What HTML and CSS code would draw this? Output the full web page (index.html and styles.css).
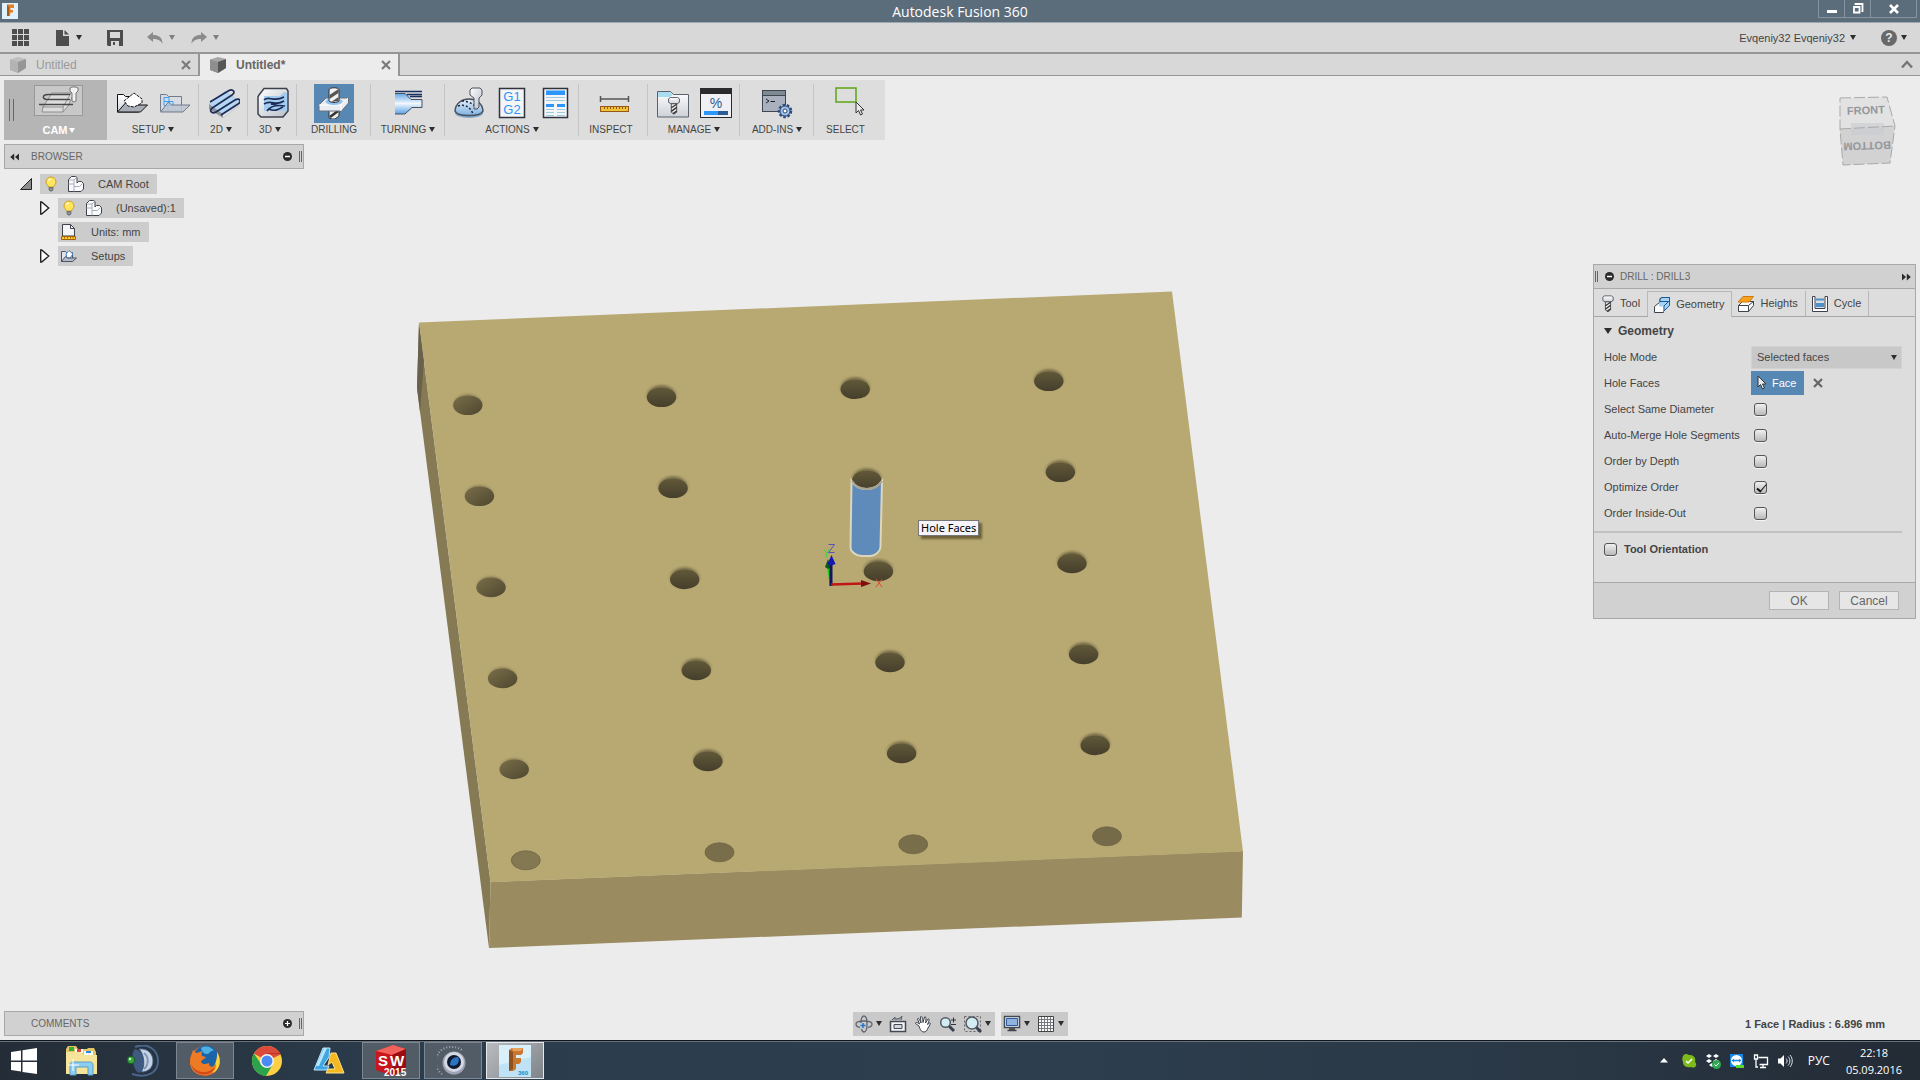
FILE: index.html
```html
<!DOCTYPE html>
<html lang="en">
<head>
    <meta charset="UTF-8">
    <meta name="viewport" content="width=device-width, initial-scale=1.0">
    <title>Autodesk Fusion 360</title>
    <link rel="stylesheet" href="styles.css">
</head>
<body>

    <!-- Shared shapes -->
    <svg class="defs" width="0" height="0" aria-hidden="true">
        <defs>
            <linearGradient id="steel" x1="0" y1="0" x2="1" y2="1">
                <stop offset="0" stop-color="#ffffff"/>
                <stop offset="1" stop-color="#b9bec6"/>
            </linearGradient>
            <linearGradient id="sky" x1="0" y1="0" x2="0" y2="1">
                <stop offset="0" stop-color="#e4f1fc"/>
                <stop offset="1" stop-color="#7fb2e2"/>
            </linearGradient>
            <linearGradient id="skyDown" x1="0" y1="0" x2="0" y2="1">
                <stop offset="0" stop-color="#5ba3e6"/>
                <stop offset="0.5" stop-color="#f2f8fd"/>
                <stop offset="1" stop-color="#5ba3e6"/>
            </linearGradient>
            <linearGradient id="paper" x1="0" y1="0" x2="0" y2="1">
                <stop offset="0" stop-color="#ffffff"/>
                <stop offset="1" stop-color="#cdd1d8"/>
            </linearGradient>
            <symbol id="bulb" viewBox="0 0 16 16">
                <path d="M8 1a5 5 0 0 0-5 5c0 2 2 3.200 2.500 5h5C11 9.200 13 8 13 6a5 5 0 0 0-5-5z" fill="#ffe65c" stroke="#d09c28"/>
                <path d="M5.500 4.500a3 3 0 0 1 2-1.500" stroke="#fff" stroke-width="1.500" fill="none"/>
                <path d="M6 11.500h4v2L9 15H7l-1-1.500z" fill="#8c8f96" stroke="#565a62" stroke-width=".7"/>
            </symbol>
            <symbol id="component" viewBox="0 0 16 16">
                <path d="M.5 3.500l3-3h4l1.500 1V7l1.500-1.500h3l2 2V13l-2.500 2.500H.5z" fill="#fafbfd" stroke="#3d424d"/>
                <path d="M.5 8H6v7.500M6 10.500h5.500l3-3M6 8V4l2.500-2.500M6 4H1" stroke="#a9adb7" fill="none"/>
            </symbol>
            <symbol id="doc-cube" viewBox="0 0 16 16">
                <path d="M0 2.500L8 0l8 2v9l-8 5-8-3z" fill="#a6a6a6"/>
                <path d="M8 5l8-3v9l-8 5z" fill="#565656"/>
                <path d="M0 2.500L8 5v11l-8-3z" fill="#8f8f8f"/>
            </symbol>
            <symbol id="cross" viewBox="0 0 10 10">
                <path d="M1 1l8 8M9 1L1 9" stroke="currentColor" stroke-width="2.200" fill="none"/>
            </symbol>
            <symbol id="cursor" viewBox="0 0 10 16">
                <path d="M1 1v11l2.500-2.500L5.500 14l2-1-2-4H9z" fill="#e9eaec" stroke="#333"/>
            </symbol>
            <symbol id="screw" viewBox="0 0 14 20">
                <path d="M1 2l2-1.500h8L13 2v4l-2.500 1.500h-7L1 6z" fill="url(#paper)" stroke="#4a4f59"/>
                <path d="M4 7.500h6V17l-3 2-3-2z" fill="#f0f0f0" stroke="#444"/>
                <path d="M4 12l6-4M4 16l6-4.500M6 18.500l4-3" stroke="#333" stroke-width="1.500"/>
            </symbol>
            <symbol id="tray" viewBox="0 0 32 32">
                <path d="M1.500 25V7.500h6l2 2h13V25z" fill="url(#paper)" stroke="#111"/>
            </symbol>
            <symbol id="open" viewBox="0 0 12 10">
                <path d="M0 5l5-4.500v9zM6 5l5-4.500v9z" fill="#2a2a2a"/>
            </symbol>
        </defs>
    </svg>

    <header class="title-bar">
        <svg class="app-logo" viewBox="0 0 16 16" aria-hidden="true">
            <rect width="16" height="16" fill="#dff1fb"/>
            <path d="M5 1.500h7v3.500H8.500v2H11v2.500H8.500L8 13H5z" fill="#e27f22"/>
            <path d="M5 1.500l2 2.500v9H5z" fill="#a85a14"/>
        </svg>
        <h1>Autodesk Fusion 360</h1>
        <div class="window-buttons">
            <button type="button" aria-label="Minimize">
                <svg width="12" height="12"><rect x="1" y="7" width="10" height="3" fill="#fff"/></svg>
            </button>
            <button type="button" aria-label="Restore">
                <svg width="12" height="12"><path d="M3.500 2V1h7v7H9.500M2 4h5.500v5.500H2z" fill="none" stroke="#fff" stroke-width="1.800"/></svg>
            </button>
            <button type="button" class="close" aria-label="Close">
                <svg width="12" height="12"><path d="M2 2l8 8M10 2l-8 8" stroke="#fff" stroke-width="2.500"/></svg>
            </button>
        </div>
    </header>

    <nav class="quick-bar">
        <button type="button" class="quick-grid" aria-label="Data panel">
            <svg width="17" height="17"><path d="M0 0h5v5H0zM6 0h5v5H6zM12 0h5v5h-5zM0 6h5v5H0zM6 6h5v5H6zM12 6h5v5h-5zM0 12h5v5H0zM6 12h5v5H6zM12 12h5v5h-5z" fill="#4d4d4d"/></svg>
        </button>
        <button type="button" class="quick-file" aria-label="File">
            <svg width="14" height="16"><path d="M0 0h7v6h6v10H0z" fill="#4d4d4d"/><path d="M8.500 0L13 4.500H8.500z" fill="#4d4d4d"/></svg>
            <span class="caret"></span>
        </button>
        <button type="button" class="quick-save" aria-label="Save">
            <svg width="16" height="16"><path d="M0 0h16v16H1l-1-1z" fill="#4d4d4d"/><path d="M3 2h10v6H3z" fill="#d8d8d8"/><path d="M4 11h8v5H4z" fill="#d8d8d8"/><path d="M6 12h2v3H6z" fill="#4d4d4d"/></svg>
        </button>
        <button type="button" class="quick-undo" aria-label="Undo">
            <svg width="16" height="12"><path d="M0 5l6-5v3c6 0 9.500 2.500 9.500 9C14 8.500 11 7 6 7v3z" fill="#8b8b8b"/></svg>
            <span class="caret dim"></span>
        </button>
        <button type="button" class="quick-redo" aria-label="Redo">
            <svg width="16" height="12"><path d="M16 5l-6-5v3C4 3 .5 5.500.5 12 2 8.500 5 7 10 7v3z" fill="#8b8b8b"/></svg>
            <span class="caret dim"></span>
        </button>
        <button type="button" class="user">Evqeniy32 Evqeniy32 <span class="caret"></span></button>
        <button type="button" class="help" aria-label="Help">
            <span class="help-mark">?</span>
            <span class="caret"></span>
        </button>
    </nav>

    <div class="doc-tabs">
        <div class="doc-tab inactive">
            <svg width="16" height="16"><use href="#doc-cube"/></svg>
            <a href="#doc1">Untitled</a>
            <button type="button" aria-label="Close tab"><svg width="10" height="10"><use href="#cross"/></svg></button>
        </div>
        <div class="doc-tab active">
            <svg width="16" height="16"><use href="#doc-cube"/></svg>
            <a href="#doc2">Untitled*</a>
            <button type="button" aria-label="Close tab"><svg width="10" height="10"><use href="#cross"/></svg></button>
        </div>
        <button type="button" class="collapse" aria-label="Collapse">
            <svg width="12" height="9"><path d="M1 7.500L6 2l5 5.500" fill="none" stroke="#777" stroke-width="2.500"/></svg>
        </button>
    </div>

    <main class="workspace">

        <!-- Model -->
        <svg class="model" viewBox="0 76 1920 964" role="img" aria-label="Drilled plate">
            <defs>
                <linearGradient id="hole" x1="0" y1="0" x2="0" y2="1">
                    <stop offset="0" stop-color="#625939"/>
                    <stop offset="1" stop-color="#453e2b"/>
                </linearGradient>
                <linearGradient id="holeLight" x1="0" y1="0" x2="1" y2="1">
                    <stop offset="0" stop-color="#7a6f4a"/>
                    <stop offset="1" stop-color="#4e462f"/>
                </linearGradient>
                <radialGradient id="halo">
                    <stop offset="0.7" stop-color="#6d6340" stop-opacity=".7"/>
                    <stop offset="1" stop-color="#b8a973" stop-opacity="0"/>
                </radialGradient>
                <g id="deep">
                    <ellipse cy="-2" rx="18" ry="13" fill="url(#halo)"/>
                    <ellipse rx="14.700" ry="9.800" fill="url(#hole)"/>
                </g>
                <g id="deepLeft">
                    <ellipse cy="-2" rx="17" ry="12" fill="url(#halo)" opacity=".6"/>
                    <ellipse rx="14.700" ry="9.800" fill="url(#holeLight)"/>
                </g>
                <g id="holeRow">
                    <use href="#deepLeft"/>
                    <use href="#deep" x="193.700" y="-8"/>
                    <use href="#deep" x="387.400" y="-16"/>
                    <use href="#deep" x="581" y="-24"/>
                </g>
            </defs>
            <path d="M419 322.500L417 388 489 948l1.500-66z" fill="#857a54"/>
            <path d="M419 322.500L417 388l3 24 4-52z" fill="#6a614c"/>
            <path d="M490.500 882l752.500-31-1.200 66.500L489 948z" fill="#9a8c60"/>
            <path d="M419 322.500L1172 291.500l71 560-752.500 30.800z" fill="#b8a973"/>
            <use href="#holeRow" x="467.800" y="405.200"/>
            <use href="#holeRow" x="479.400" y="496.300"/>
            <use href="#holeRow" x="491" y="587.400"/>
            <use href="#holeRow" x="502.600" y="678.400"/>
            <use href="#holeRow" x="514.200" y="769.400"/>
            <g stroke="#6e6444" stroke-width=".8">
                <ellipse cx="525.800" cy="860.300" rx="14.500" ry="9.500" fill="#837851"/>
                <ellipse cx="719.500" cy="852.300" rx="14.500" ry="9.500" fill="#796e4a"/>
                <ellipse cx="913.200" cy="844.300" rx="14.500" ry="9.500" fill="#796e4a"/>
                <ellipse cx="1107" cy="836.300" rx="14.500" ry="9.500" fill="#766b48"/>
            </g>
            <path d="M851.500 481c3 5 8 8 15 8s12-3 15.500-8l-1.500 66c0 4-5 9-10 9h-9c-6 0-11-5-11-8z" fill="#5f8bbb" stroke="#ddd5bc" stroke-width="2"/>
            <path d="M852 481c3 5 8 8 15 8s12-3 15-8" fill="none" stroke="#a9a391" stroke-width="2"/>
            <!-- Axes -->
            <path d="M831 585l-3-20" stroke="#12d312" stroke-width="2.500"/>
            <path d="M828 559l-3 8 3 2 3-2z" fill="#0b5a1c"/>
            <path d="M831 586v-22" stroke="#14145c" stroke-width="3"/>
            <path d="M831.500 555l-4 9 4 1.500 4-1.500z" fill="#1616b4"/>
            <path d="M831 584.500l32-1" stroke="#c01616" stroke-width="2.500"/>
            <path d="M871 583.500l-10-3.500v7z" fill="#7c1010"/>
            <g fill="none" stroke-width="1">
                <path d="M828.500 544.500h6l-6 8h6" stroke="#5552c8"/>
                <path d="M824 549.500l3 4 2-4M827 553.500l-1 4" stroke="#2fdc2f"/>
                <path d="M876 579l6 8M882 579l-6 8" stroke="#e34b33"/>
            </g>
        </svg>
        <div class="tooltip" role="tooltip">Hole Faces</div>

        <div class="left-side">
            <div class="ribbon">
                <button type="button" class="mode">
                    <span class="grip"></span>
                    <span class="mode-body">
                        <svg width="49" height="31">
                            <rect x=".5" y=".5" width="48" height="30" fill="#c8c8c8" stroke="#989898"/>
                            <path d="M9 22l9-14h22l-6 13-5 6H8z" fill="#dcdcdc" stroke="#8f8f8f"/>
                            <path d="M8 22h21l8-14M29 22v5" fill="none" stroke="#8f8f8f"/>
                            <path d="M36 9.500H14c-6 0-6 5-1 5h23M5 19.500h34" fill="none" stroke="#484848" stroke-width="1.500"/>
                            <path d="M36 3l2-1h4l2 1v3l-2 2v8l-2 1-2-1V8l-2-2z" fill="#f1f1f1" stroke="#777"/>
                        </svg>
                        <span class="group-label">CAM<span class="caret"></span></span>
                    </span>
                </button>

                <div class="group wide">
                    <div class="icons">
                        <button type="button" aria-label="New setup">
                            <svg width="32" height="32">
                                <use href="#tray"/>
                                <path d="M1.500 25l8-9 3 2h19l-7 7z" fill="#a8adb6" stroke="#111"/>
                                <path d="M8 14l10-8 8 6v4l-8 4-6-1z" fill="#fff" stroke="#111" stroke-dasharray="3 1"/>
                            </svg>
                        </button>
                        <button type="button" aria-label="New folder">
                            <svg width="32" height="32">
                                <path d="M1.500 24V7.500h6l2 2h13V24z" fill="#d8dce3" stroke="#737b8b"/>
                                <path d="M5 10.500h5v4H5zM5 14.500h5v4H5zM10 14.500h4v4h-4zM5 18.500h4V23" fill="#c5e0f8" stroke="#4a9ae4"/>
                                <path d="M1.500 25l8-10 3 3h18.500l-7 7z" fill="#bcc5d3" fill-opacity=".85" stroke="#737b8b"/>
                            </svg>
                        </button>
                    </div>
                    <span class="group-label">SETUP<span class="caret"></span></span>
                </div>

                <div class="group narrow">
                    <div class="icons">
                        <button type="button" aria-label="2D milling">
                            <svg width="32" height="32">
                                <path d="M1 17L17 4l14 10v5L15 31 1 22z" fill="#8f949c"/>
                                <path d="M1 17L17 4l14 10-16 13z" fill="#b5d6f3"/>
                                <path d="M15 27l16-13v5L15 31z" fill="url(#steel)"/>
                                <path d="M2 15L21 3.500c4-2 7 2 3 4.500L5 20.500c-5 3-1 7 3 4.500L27 13c5-3 7 2 3 4L13 28" fill="none" stroke="#1c2c58" stroke-width="1.700"/>
                            </svg>
                        </button>
                    </div>
                    <span class="group-label">2D<span class="caret"></span></span>
                </div>

                <div class="group narrow">
                    <div class="icons">
                        <button type="button" aria-label="3D milling">
                            <svg width="32" height="32">
                                <path d="M2 8l5-6.500h22.500L31 4v20l-5 6H4l-3-3V10z" fill="url(#steel)" stroke="#3c424d" stroke-width="1.500"/>
                                <path d="M7 9h16l4-4 3 1v18H7z" fill="#a3ccf1"/>
                                <path d="M7 13c5-5 9 3 20-3M7 17c8-5 11 3 20-3-5 2-9 4-13 3M10 24c4-6 12-6 18-5M12 22c6 3 10 0 14-2" fill="none" stroke="#1c2c58" stroke-width="1.700"/>
                            </svg>
                        </button>
                    </div>
                    <span class="group-label">3D<span class="caret"></span></span>
                </div>

                <div class="group medium">
                    <div class="icons">
                        <button type="button" class="selected" aria-label="Drilling">
                            <svg width="32" height="32">
                                <path d="M11 31v-8h10v6l-4 3h-3z" fill="#eee" stroke="#333"/>
                                <path d="M12 30l8-6" stroke="#333" stroke-width="2.500"/>
                                <path d="M1 18l7-7h22.500v5l-7 8H1z" fill="#e9edf2" stroke="#69707c"/>
                                <path d="M1 18h22l7-7M23 18v6" fill="none" stroke="#fff"/>
                                <ellipse cx="16" cy="14.500" rx="8.500" ry="3.500" fill="#8fc2f1"/>
                                <path d="M11 3c0-3 10-3 10 0v11c-2 2-8 2-10 0z" fill="#f2f2f2" stroke="#333"/>
                                <path d="M11.500 8l9-6v4l-9 6z" fill="#555"/>
                                <path d="M13 15l7.500-5v4z" fill="#555"/>
                            </svg>
                        </button>
                    </div>
                    <span class="group-label">DRILLING</span>
                </div>

                <div class="group medium">
                    <div class="icons">
                        <button type="button" aria-label="Turning">
                            <svg width="32" height="32">
                                <path d="M3 6h10l6 6h11v9H20l-7 6H3z" fill="url(#skyDown)"/>
                                <path d="M3 6.500h10l6 6h11v8H20l-7 6.500H3" fill="none" stroke="#4a515e"/>
                                <path d="M3 4.500h27M15 7.500h15M18 9.500h12" stroke="#16305f" stroke-width="1.500"/>
                            </svg>
                        </button>
                    </div>
                    <span class="group-label">TURNING<span class="caret"></span></span>
                </div>

                <div class="group actions">
                    <div class="icons">
                        <button type="button" aria-label="Simulate">
                            <svg width="32" height="32">
                                <ellipse cx="16" cy="26" rx="14" ry="5" fill="#7fa5c9"/>
                                <path d="M2 24C3 8 29 8 30 24c-2 6-26 6-28 0z" fill="url(#sky)" stroke="#4a515e" stroke-width="1.500"/>
                                <path d="M5 19c6-2 12 0 15 8M9 14c7 0 14 4 16 10" fill="none" stroke="#223" stroke-dasharray="2 2" stroke-width="1.500"/>
                                <path d="M17 3l2-2h8l2 2v5l-3 3v9l-2 2h-3V11l-4-3z" fill="url(#steel)" stroke="#4a515e"/>
                            </svg>
                        </button>
                        <button type="button" aria-label="Post process">
                            <svg width="32" height="32">
                                <rect x="3.500" y="1.500" width="25" height="29" fill="#f4f5f7" stroke="#2e333c" stroke-width="1.500"/>
                                <text class="g-code" x="16" y="14">G1</text>
                                <text class="g-code" x="16" y="27">G2</text>
                            </svg>
                        </button>
                        <button type="button" aria-label="Setup sheet">
                            <svg width="32" height="32">
                                <rect x="4.500" y="1.500" width="24" height="29" fill="#f4f5f7" stroke="#2e333c" stroke-width="1.500"/>
                                <path d="M7 3.500h19v4.500H7zM7 17h8v3H7zM18 17h8v3h-8z" fill="#2d96fa"/>
                                <path d="M7 10.500h19M7 13.500h19M7 22.500h8M18 22.500h8M7 25.500h8M18 25.500h8M7 28.500h8M18 28.500h8" stroke="#9ccbe0"/>
                            </svg>
                        </button>
                    </div>
                    <span class="group-label">ACTIONS<span class="caret"></span></span>
                </div>

                <div class="group inspect">
                    <div class="icons">
                        <button type="button" aria-label="Measure">
                            <svg width="32" height="32">
                                <path d="M3 12h27M2.500 9v6M30.500 9v6" stroke="#555" stroke-width="1.500"/>
                                <rect x="2.500" y="19.500" width="28" height="5" fill="#f0c235" stroke="#94591a"/>
                                <path d="M6.500 20v2M9.500 20v2M12.500 20v2M15.500 20v2M18.500 20v2M21.500 20v2M24.500 20v2M27.500 20v2" stroke="#94591a"/>
                            </svg>
                        </button>
                    </div>
                    <span class="group-label">INSPECT</span>
                </div>

                <div class="group wide">
                    <div class="icons">
                        <button type="button" aria-label="Tool library">
                            <svg width="32" height="32">
                                <path d="M.5 30V4.500h13l3 3h15V30z" fill="url(#paper)" stroke="#5b626d"/>
                                <path d="M1 5h12l3 3-3 2H1z" fill="#a9dcee"/>
                                <svg x="10" y="10" width="14" height="18"><use href="#screw"/></svg>
                            </svg>
                        </button>
                        <button type="button" aria-label="Task manager">
                            <svg width="32" height="32">
                                <rect x=".5" y="1.500" width="31" height="29" fill="#eef0f3" stroke="#2b2b2e"/>
                                <path d="M0 1h32v6H0z" fill="#2b2b2e"/>
                                <text class="percent" x="16" y="21">%</text>
                                <path d="M4 24h14v4H4z" fill="#2d96fa"/><path d="M18 24h10v4H18z" fill="#2c5d94"/>
                            </svg>
                        </button>
                    </div>
                    <span class="group-label">MANAGE<span class="caret"></span></span>
                </div>

                <div class="group medium">
                    <div class="icons">
                        <button type="button" aria-label="Scripts and add-ins">
                            <svg width="32" height="32">
                                <rect x="1.500" y="3.500" width="23" height="21" fill="#a9b1be" stroke="#3f4651"/>
                                <path d="M2 4h22v4H2z" fill="#7f8a90"/>
                                <path d="M1.500 8.500h23" stroke="#3f4651"/>
                                <path d="M5 12l3 2-3 2M9.500 14.500H14" fill="none" stroke="#222"/>
                                <circle cx="24" cy="24" r="6" fill="#8fb6e3" stroke="#2f4a74" stroke-width="2.500" stroke-dasharray="2.500 1.700"/>
                                <circle cx="24" cy="24" r="5" fill="#9fc2ea" stroke="#2f4a74"/>
                                <circle cx="24" cy="24" r="2" fill="#fff" stroke="#2f4a74"/>
                            </svg>
                        </button>
                    </div>
                    <span class="group-label">ADD-INS<span class="caret"></span></span>
                </div>

                <div class="group select-group">
                    <div class="icons">
                        <button type="button" aria-label="Select">
                            <svg width="32" height="32">
                                <rect x="2" y="1" width="20" height="14" fill="none" stroke="#5ea514" stroke-width="1.500"/>
                                <svg x="21" y="14" width="10" height="16"><use href="#cursor"/></svg>
                            </svg>
                        </button>
                    </div>
                    <span class="group-label">SELECT</span>
                </div>
            </div>

            <section class="browser">
                <div class="panel-head">
                    <svg width="12" height="8"><use href="#open"/></svg>
                    <h2>BROWSER</h2>
                    <button type="button" class="round" aria-label="Hide"><svg width="9" height="9"><circle cx="4.500" cy="4.500" r="4.500" fill="#2a2a2a"/><path d="M2 4.500h5" stroke="#fff" stroke-width="1.500"/></svg></button>
                    <span class="grip small"></span>
                </div>
                <ul class="tree">
                    <li class="level-0">
                        <svg class="twist" width="12" height="12"><path d="M.5 11.500l11-11v11z" fill="#8b8b8b" stroke="#222"/></svg>
                        <a href="#root"><svg width="16" height="16"><use href="#bulb"/></svg><svg width="16" height="16"><use href="#component"/></svg><span>CAM Root</span></a>
                    </li>
                    <li class="level-1">
                        <svg class="twist" width="12" height="14"><path d="M.7 1h1l7 6-7 6h-1z" fill="#fff" stroke="#222" stroke-width="1.400"/></svg>
                        <a href="#unsaved"><svg width="16" height="16"><use href="#bulb"/></svg><svg width="16" height="16"><use href="#component"/></svg><span>(Unsaved):1</span></a>
                    </li>
                    <li class="level-1">
                        <span class="twist"></span>
                        <a href="#units">
                            <svg width="16" height="16"><path d="M1.500 12V.5h8l4 4V12z" fill="#f3f4f8" stroke="#3d424d"/><path d="M9.500.5v4h4" fill="none" stroke="#3d424d"/><path d="M.5 12.500h14v3H.5z" fill="#ffc933" stroke="#a16508"/><path d="M3.500 13v1.500M6.500 13v1.500M9.500 13v1.500M12 13v1.500" stroke="#a16508"/></svg>
                            <span>Units: mm</span>
                        </a>
                    </li>
                    <li class="level-1">
                        <svg class="twist" width="12" height="14"><path d="M.7 1h1l7 6-7 6h-1z" fill="#fff" stroke="#222" stroke-width="1.400"/></svg>
                        <a href="#setups">
                            <svg width="16" height="16"><path d="M.5 13.500v-10h4l1 1h6v9z" fill="#dfe4ec" stroke="#4d5564"/><path d="M5 6l3-3.500L12 6l-3 4H6z" fill="#fff" stroke="#3d7fc2"/><path d="M.5 13.500l4-5 2 1.500h9l-4 3.500z" fill="#b2bccb" stroke="#4d5564"/></svg>
                            <span>Setups</span>
                        </a>
                    </li>
                </ul>
            </section>
        </div>

        <div class="right-side">
            <svg class="view-cube" width="60" height="72" role="img" aria-label="View cube">
                <path d="M2 2l47-1 8 29-55 3z" fill="#e2e2e2"/>
                <path d="M2 33l55-3-5 37-47 2z" fill="#d2d2d2"/>
                <path d="M13 27h33v12H13z" fill="#c9ccd0" opacity=".6"/>
                <path d="M2 2l47-1 8 29-5 37-47 2L2 33zM2 33l55-3" fill="none" stroke="#a9a9a9" stroke-dasharray="11 3"/>
                <text x="28" y="18" transform="rotate(-2 28 18)">FRONT</text>
                <text x="29" y="46" transform="rotate(178 29 46)">BOTTOM</text>
            </svg>

            <form class="drill">
                <div class="panel-head">
                    <span class="grip small"></span>
                    <button type="button" class="round" aria-label="Hide"><svg width="9" height="9"><circle cx="4.500" cy="4.500" r="4.500" fill="#2a2a2a"/><path d="M2 4.500h5" stroke="#fff" stroke-width="1.500"/></svg></button>
                    <h2>DRILL : DRILL3</h2>
                    <svg class="flip" width="12" height="8"><use href="#open"/></svg>
                </div>
                <div class="drill-tabs">
                    <button type="button">
                        <svg width="12" height="18"><use href="#screw"/></svg>Tool
                    </button>
                    <button type="button" class="current">
                        <svg width="16" height="16"><path d="M.5 9.500L6 5V1.500L8 .5h7.500v8l-6 6v1h-9z" fill="#fdfdfd" stroke="#3d424d"/><path d="M6 5V1.500L8 .5h7.500v8l-6 6v-5H5V6z" fill="#a6d2f5"/><path d="M6 4.500V2l2-1.500h7.500v8L10 14V9l4.500-4.500zM14.500 4.500H6" fill="none" stroke="#185a92"/></svg>Geometry
                    </button>
                    <button type="button">
                        <svg width="16" height="16"><path d="M.5 9.500l4-4h11v4l-5 6H.5z" fill="#fdfdfd" stroke="#3d424d"/><path d="M.5 9.500h10v6M10.500 9.500l5-4" fill="none" stroke="#3d424d"/><path d="M0 6l5-5.500h10.500L11 6z" fill="#f8a11c" stroke="#cf7a0c"/></svg>Heights
                    </button>
                    <button type="button">
                        <svg width="16" height="16"><path d="M.5.5h2.500v12h10V.5h2.500v15H.5z" fill="#fff" stroke="#3d424d"/><path d="M4 2.500h8v2H4zM4 7h8v4H4z" fill="#4d90cc"/></svg>Cycle
                    </button>
                </div>

                <div class="drill-body">
                    <h3><span class="caret big"></span>Geometry</h3>
                    <div class="field">
                        <label for="hole-mode">Hole Mode</label>
                        <span class="select-box">
                            <select id="hole-mode"><option>Selected faces</option></select>
                            <span class="caret"></span>
                        </span>
                    </div>
                    <div class="field">
                        <label for="hole-faces">Hole Faces</label>
                        <button type="button" id="hole-faces" class="face"><svg width="10" height="16"><use href="#cursor"/></svg>Face</button>
                        <button type="button" class="clear" aria-label="Clear selection"><svg width="10" height="10"><use href="#cross"/></svg></button>
                    </div>
                    <div class="field">
                        <label for="same-diameter">Select Same Diameter</label>
                        <input type="checkbox" id="same-diameter">
                    </div>
                    <div class="field">
                        <label for="auto-merge">Auto-Merge Hole Segments</label>
                        <input type="checkbox" id="auto-merge">
                    </div>
                    <div class="field">
                        <label for="by-depth">Order by Depth</label>
                        <input type="checkbox" id="by-depth">
                    </div>
                    <div class="field">
                        <label for="optimize">Optimize Order</label>
                        <input type="checkbox" id="optimize" checked>
                    </div>
                    <div class="field">
                        <label for="inside-out">Order Inside-Out</label>
                        <input type="checkbox" id="inside-out">
                    </div>
                </div>
                <div class="orientation">
                    <input type="checkbox" id="orientation">
                    <label for="orientation">Tool Orientation</label>
                </div>
                <div class="drill-foot">
                    <button type="button">OK</button>
                    <button type="button">Cancel</button>
                </div>
            </form>
        </div>

        <footer class="status-row">
            <section class="comments panel-head">
                <h2>COMMENTS</h2>
                <button type="button" class="round" aria-label="Show"><svg width="9" height="9"><circle cx="4.500" cy="4.500" r="4.500" fill="#2a2a2a"/><path d="M2 4.500h5M4.500 2v5" stroke="#fff" stroke-width="1.200"/></svg></button>
                <span class="grip small"></span>
            </section>
            <div class="view-tools">
                <div class="tool-set">
                    <button type="button" aria-label="Orbit">
                        <svg width="18" height="18"><path d="M5 12.500C2 12 1 10 1 9c0-2 3-3 8-3s8 1 8 3c0 1-1 3-4 3.500M6 8c0-4 1-7 3-7s3 3 3 8-1 8-3 8c-1 0-2-1-2.500-3" fill="none" stroke="#5f6470" stroke-width="1.300"/><path d="M8 8v5M5.500 10.500h5" stroke="#1f78d1" stroke-width="1.500"/></svg>
                        <span class="caret"></span>
                    </button>
                    <button type="button" aria-label="Look at">
                        <svg width="18" height="18"><path d="M1.500 6.500h15v10h-15z" fill="#f3f4f8" stroke="#434955" stroke-width="1.500"/><path d="M5 9.500h8v4H5z" fill="#d2d6dd" stroke="#434955"/><path d="M3 5l3-3v2c3 0 6-1 7-3l-1 4" fill="#9aa1ad" stroke="#5a606c"/></svg>
                    </button>
                    <button type="button" aria-label="Pan">
                        <svg width="18" height="18"><path d="M5 11L1.500 8.500c0-1.500 1.500-1.500 4 .5L3.500 4C4 2.500 5 3 7 8L6.500 2C7 .5 8.500 1 9 7.500L10.500 2c1-1 2 0 1 6l2.500-4c1.500-.5 1.500 1-.5 5.500l2-1.500c1.500 0 1 1-1.500 5-1 3-2.500 4-4 4-3 0-4-3-5-6z" fill="#fff" stroke="#3c424d"/></svg>
                    </button>
                    <button type="button" aria-label="Zoom">
                        <svg width="18" height="18"><path d="M9 10l6 6" stroke="#3c424d" stroke-width="3"/><circle cx="6.500" cy="7.500" r="4.800" fill="#d3ecf2" stroke="#535a66" stroke-width="1.500"/><path d="M12 5h5M14.500 2.500v5M12 9.500h5" stroke="#333"/></svg>
                    </button>
                    <button type="button" aria-label="Fit">
                        <svg width="18" height="18"><path d="M.5 1.500h16v15H.5z" fill="none" stroke="#666" stroke-dasharray="2 2"/><path d="M11 11l6 6" stroke="#3c424d" stroke-width="3"/><circle cx="8" cy="8" r="6" fill="#d3ecf2" stroke="#535a66" stroke-width="1.500"/></svg>
                        <span class="caret"></span>
                    </button>
                </div>
                <div class="tool-set">
                    <button type="button" aria-label="Display settings">
                        <svg width="18" height="18"><path d="M1.500 1.500h15v11h-15z" fill="#f5f6f8" stroke="#434955" stroke-width="1.500"/><path d="M3.500 3.500h11v7h-11z" fill="#8fb3df" stroke="#2f5c9c"/><path d="M6 13h6v2H6z" fill="#555"/><path d="M4.500 15.500h9" stroke="#444" stroke-width="1.500"/></svg>
                        <span class="caret"></span>
                    </button>
                    <button type="button" aria-label="Grid">
                        <svg width="18" height="18"><path d="M1.500 1.500h15v15h-15z" fill="#fafafa" stroke="#444"/><path d="M4.500 2v14M7.500 2v14M10.500 2v14M13.500 2v14M2 4.500h14M2 7.500h14M2 10.500h14M2 13.500h14" stroke="#73777f"/></svg>
                        <span class="caret"></span>
                    </button>
                </div>
            </div>
            <p class="selection-info">1 Face | Radius : 6.896 mm</p>
        </footer>
    </main>

    <!-- Windows taskbar -->
    <footer class="taskbar">
        <button type="button" class="start" aria-label="Start">
            <svg width="26" height="26"><path d="M0 4l10-1.500v10H0zM11.500 2.300L26 0v12.500H11.500zM0 14h10v9.500L0 22zM11.500 14H26v12l-14.500-2z" fill="#fff"/></svg>
        </button>
        <button type="button" class="app" aria-label="Explorer">
            <svg width="32" height="32">
                <path d="M1 4l2-3h8l2 3h9l1-1h6l2 4v21H1z" fill="#e3c566"/>
                <path d="M4 2h5v4H4z" fill="#2fae3e"/><path d="M10 4h8v4h-8z" fill="#fff"/><path d="M12 4h4v3h-4z" fill="#d9442f"/><path d="M19 6h9v4h-9z" fill="#fff"/><path d="M21 6h5v2h-5z" fill="#2f88d9"/>
                <path d="M1 7h14l4 3h13v19H1z" fill="#f7e49b"/>
                <path d="M5 30V20c0-2 1-3 3-3h17c2 0 3 1 3 3v10h-5v-8H11v8z" fill="#8ccdf0" stroke="#5b9fc9"/>
                <path d="M8 14v12M3 20h11" stroke="#fff"/>
            </svg>
        </button>
        <button type="button" class="app" aria-label="TeamSpeak">
            <svg width="32" height="32">
                <path d="M8 2c13-5 23 3 23 14S21 34 5 29" fill="none" stroke="#49668c" stroke-width="2"/>
                <path d="M12 4c9-1 14 5 14 12s-5 11-12 11c4-4 4-17-2-23z" fill="#c5d3e4" stroke="#48648c"/>
                <path d="M8 4c10 2 11 20 4 24-6-2-9-20-4-24z" fill="#3f5a80"/>
                <path d="M17 8c5 4 5 11 0 16" fill="none" stroke="#8097b5" stroke-width="2"/>
                <circle cx="4" cy="15" r="3.800" fill="#36a33f" stroke="#155c1f"/><circle cx="3" cy="14" r="1.200" fill="#d4f5cf"/>
            </svg>
        </button>
        <button type="button" class="app running" aria-label="Firefox">
            <svg width="32" height="32">
                <circle cx="16" cy="16" r="15" fill="#e6651f"/>
                <circle cx="17" cy="13" r="12.500" fill="#1c63a8"/>
                <path d="M12 3c5-3 11-1 13 3-4-1-4 3-7 3s-5-2-6-6z" fill="#4fb0e2"/>
                <path d="M28 7c5 8 3 17-4 21-2-5 5-10 4-21z" fill="#fbd63a"/>
                <path d="M4 5c2 1 2 3 4 3l5-2c0 3-1 4 0 5l4 1c-1 2-4 2-5 5 2 3 5 2 8 1 0 5 5 5 7 0 1 9-7 13-13 12C6 30 1 24 1 17 1 12 3 9 4 5z" fill="#ee7a24"/>
                <path d="M2 19c4 9 17 11 24 3-3 10-21 11-24-3z" fill="#cf4a1c"/>
            </svg>
        </button>
        <button type="button" class="app" aria-label="Chrome">
            <svg width="32" height="32">
                <circle cx="16" cy="16" r="15" fill="#fdcf45"/>
                <path d="M16 16L3 8.500A15 15 0 0 1 29.500 9.500z" fill="#dc4a3a"/>
                <path d="M3 8.500A15 15 0 0 0 15 31l7-12-12 0z" fill="#2ba24c"/>
                <path d="M16 9h13.500l-.5-1H16z" fill="#b83527"/>
                <circle cx="16" cy="16" r="7" fill="#f5f5f5"/><circle cx="16" cy="16" r="5.500" fill="#4c8bf5"/>
            </svg>
        </button>
        <button type="button" class="app" aria-label="AIDA">
            <svg width="32" height="32">
                <path d="M10 3h7l-1 9-6 9h6l-2 4H1z" fill="#3fa6e6" stroke="#bfe7fb"/>
                <path d="M11 3h3L6 21H3z" fill="#b8e6fb"/>
                <path d="M18 8h5l8 20H13l2-4h7l-3-7-4 3z" fill="#f5b81f" stroke="#fae48f"/>
            </svg>
        </button>
        <button type="button" class="app running" aria-label="SolidWorks 2015">
            <svg width="32" height="32">
                <path d="M1 6l17-6 13 4v20L17 31 1 25z" fill="#c8161c"/>
                <path d="M1 6l17-6 13 4-14 6z" fill="#f0625b"/>
                <path d="M17 10l14-6v20l-14 7z" fill="#9b0d13"/>
                <text class="sw" x="3" y="21">S</text><text class="sw" x="15" y="21">W</text>
                <text class="sw-year" x="9" y="31">2015</text>
            </svg>
        </button>
        <button type="button" class="app running" aria-label="Camera">
            <svg width="32" height="32">
                <path d="M5 29A15 15 0 0 1 16 2a15 15 0 0 1 10 4" fill="none" stroke="#a3a9b3" stroke-width="2" stroke-dasharray="1 2"/>
                <circle cx="17" cy="18" r="11.500" fill="#9da3b1"/><circle cx="17" cy="17" r="10" fill="#d5d9e6"/>
                <circle cx="17" cy="17" r="7" fill="#10182b"/><path d="M13 20c0-5 3-8 8-8 3 5-2 11-8 8z" fill="#2a74c4"/>
            </svg>
        </button>
        <button type="button" class="app focused" aria-label="Fusion 360">
            <svg width="32" height="32">
                <path d="M0 0h32v32H0z" fill="#d9eff9"/><path d="M0 20L32 12v20H0z" fill="#bfe3f4"/>
                <path d="M10 5l3-2h11v5l-2 2h-5v3h5v4l-2 2h-3v5l-3 2h-4z" fill="#c77730"/>
                <path d="M10 5l4 2v17l-4 2z" fill="#92501a"/><path d="M13 3h11l-2 3h-8z" fill="#e9a05a"/>
                <text class="f-360" x="19" y="30">360</text>
            </svg>
        </button>

        <div class="notify">
            <svg width="8" height="5"><path d="M0 4.500L4 0l4 4.500z" fill="#fff"/></svg>
            <svg width="16" height="16"><path d="M2 3c2-3 4-2 6-1 5 0 7 3 6 7 3 3 0 7-4 5C4 15 2 12 2 9 1 7 1 5 2 3z" fill="#7fba1c"/><path d="M5 8l2 2 4-4" fill="none" stroke="#fff" stroke-width="1.500"/></svg>
            <svg width="16" height="16"><path d="M4 1l3 2-3 2-3-2zM11 1l3 2-3 2-3-2zM4 6l3 2-3 2-3-2zM11 6l3 2-3 2-3-2zM7 10l3 2-3 2-3-2z" fill="#fff"/><circle cx="11.500" cy="11.500" r="4.500" fill="#2faa4e"/><path d="M9.500 11.500l1.500 1.500 3-3" fill="none" stroke="#fff"/></svg>
            <svg width="16" height="16"><rect x="1" y="1" width="13" height="13" fill="#1787e6"/><circle cx="7.500" cy="7.500" r="5.500" fill="#fff"/><path d="M2.500 7.500L5 5.500v1.200h5V5.500l2.500 2-2.500 2V8.300H5v1.200z" fill="#1787e6"/><rect x="7" y="12" width="8" height="3" fill="#59d92d"/></svg>
            <svg width="16" height="16"><path d="M5.500 4.500h9v7h-8M10 12v2M7 14.500h6M1.500 2v4h3V2zM3 6v8h2" fill="none" stroke="#fff" stroke-width="1.300"/></svg>
            <svg width="16" height="16"><path d="M1 5.500h2.500L7 2v12l-3.500-3.500H1z" fill="#fff"/><path d="M9 5.500c1.500 1.500 1.500 3.500 0 5M11 3.500c2.500 2.500 2.500 6.500 0 9M13 2c3 3.500 3 8.500 0 12" fill="none" stroke="#dfe3e7"/></svg>
            <span class="lang">РУС</span>
            <time class="clock" datetime="2016-09-05T22:18"><span>22:18</span><span>05.09.2016</span></time>
        </div>
    </footer>

</body>
</html>
```

FILE: styles.css
```css
/* Fusion 360 colors */
:root {
    --title-color: #5b6c7b;
    --bar-color: #d8d8d8;
    --panel-color: #dddddd;
    --head-color: #d1d1d1;
    --canvas-color: #ececec;
    --line-color: #a8a8a8;
    --accent-color: #5788b3;
    --text-color: #444444;
}

* {
    box-sizing: border-box;
}

body {
    margin: 0;
    min-height: 100vh;
    display: flex;
    flex-direction: column;
    font-family: "Liberation Sans", Arial, sans-serif;
    font-size: 11px;
    color: var(--text-color);
    background-color: var(--canvas-color);
}

button {
    font: inherit;
    color: inherit;
    background: none;
    border: none;
    padding: 0;
    display: flex;
    align-items: center;
    cursor: pointer;
}

a {
    color: inherit;
    text-decoration: none;
}

h1, h2, h3, p, ul {
    margin: 0;
    padding: 0;
}

svg {
    display: block;
    flex-shrink: 0;
}

.defs {
    position: absolute;
}

.caret {
    border: 3px solid transparent;
    border-top: 5px solid #2e2e2e;
    border-bottom: none;
    flex-shrink: 0;
}

.caret.dim {
    border-top-color: #7f7f7f;
}

.caret.big {
    border-width: 6px 4px 0;
}

/* Title bar */
.title-bar {
    height: 23px;
    display: grid;
    grid-template-columns: 1fr auto 1fr;
    align-items: center;
    background-color: var(--title-color);
    border-bottom: 1px solid #9da7b0;
}

.app-logo {
    width: 16px;
    height: 16px;
    margin-left: 2px;
}

.title-bar h1 {
    font: 14px "Open Sans", sans-serif;
    color: #fff;
}

.window-buttons {
    justify-self: end;
    align-self: start;
    display: flex;
    height: 18px;
    margin-right: 3px;
    border: 1px solid #8793a0;
    border-top: none;
}

.window-buttons button {
    width: 26px;
    justify-content: center;
    border-right: 1px solid #8793a0;
}

.window-buttons .close {
    width: 45px;
    border-right: none;
}

/* Quick access bar */
.quick-bar {
    height: 31px;
    display: flex;
    align-items: center;
    padding: 0 13px 0 12px;
    background-color: var(--bar-color);
    border-bottom: 2px solid #969696;
}

.quick-bar button {
    gap: 6px;
}

.quick-file {
    margin-left: 27px;
}

.quick-save {
    margin-left: 25px;
}

.quick-undo {
    margin-left: 24px;
}

.quick-redo {
    margin-left: 16px;
}

.user {
    margin-left: auto;
}

.quick-bar .user {
    gap: 5px;
}

.quick-bar .help {
    margin-left: 25px;
    gap: 4px;
}

.help-mark {
    width: 16px;
    height: 16px;
    border-radius: 50%;
    background-color: #686868;
    color: #e6e6e6;
    font-weight: bold;
    font-size: 12px;
    line-height: 16px;
    text-align: center;
}

/* Document tabs */
.doc-tabs {
    height: 22px;
    display: flex;
    background-color: var(--bar-color);
    border-bottom: 1px solid #969696;
}

.doc-tab {
    width: 200px;
    display: flex;
    align-items: center;
    gap: 10px;
    padding: 0 7px 0 10px;
    font-size: 12px;
    border-right: 2px solid #969696;
}

.doc-tab button {
    margin-left: auto;
    color: #7b7b7b;
}

.doc-tab.inactive {
    color: #9a9a9a;
}

.doc-tab.inactive > svg {
    opacity: 0.5;
}

.doc-tab.active {
    font-weight: bold;
    color: #666;
    background-color: var(--canvas-color);
    height: 22px;
}

.collapse {
    margin-left: auto;
    margin-right: 7px;
}

/* Workspace */
.workspace {
    flex: 1;
    position: relative;
    display: grid;
    grid-template-columns: 1fr auto;
    grid-template-rows: 1fr auto;
    padding: 4px;
}

.model {
    position: absolute;
    inset: 0;
    width: 100%;
    height: 100%;
}

.tooltip {
    position: absolute;
    left: 918px;
    top: 444px;
    padding: 0 2px;
    font: 11px/14px "Noto Sans", sans-serif;
    color: #000;
    background-color: #f4f4fa;
    border: 1px solid #767676;
    box-shadow: 3px 3px 2px rgba(60, 50, 20, 0.6);
}

.left-side, .right-side, .status-row {
    position: relative;
}

.left-side {
    display: flex;
    flex-direction: column;
    align-items: flex-start;
    gap: 4px;
}

/* Ribbon */
.ribbon {
    display: flex;
    height: 60px;
    background-color: var(--panel-color);
}

.mode {
    width: 103px;
    padding-left: 5px;
    background-color: #b5b5b5;
}

.grip {
    width: 5px;
    height: 22px;
    border: 1px solid #666;
    border-width: 0 1px;
}

.grip.small {
    width: 3px;
    height: 11px;
}

.mode-body {
    flex: 1;
    height: 60px;
    display: flex;
    flex-direction: column;
    align-items: center;
    justify-content: space-between;
    padding: 5px 4px 3px 0;
}

.mode .group-label {
    color: #fff;
    font-weight: bold;
    font-size: 11px;
    gap: 1px;
}

.mode .caret {
    border-top-color: #fff;
}

.group {
    height: 52px;
    margin-top: 4px;
    padding-left: 1px;
    display: flex;
    flex-direction: column;
    align-items: center;
    border-right: 1px solid #c4c4c4;
}

.group.narrow {
    width: 49px;
}

.group.medium {
    width: 74px;
}

.group.wide {
    width: 92px;
}

.group.actions {
    width: 134px;
}

.group.inspect {
    width: 69px;
}

.group.select-group {
    width: 71px;
    border-right: none;
}

.icons {
    display: flex;
    gap: 11px;
    height: 40px;
}

.icons .selected {
    padding: 0 4px;
    background-color: var(--accent-color);
}

.group-label {
    display: flex;
    align-items: center;
    gap: 3px;
    height: 14px;
    font-size: 10px;
}

.narrow .group-label, .inspect .group-label {
    margin-right: 5px;
}

.select-group .group-label {
    margin-right: 9px;
}

.g-code {
    font-size: 13px;
    fill: #2d96fa;
    text-anchor: middle;
}

.percent {
    font-size: 14px;
    fill: #2c5d94;
    text-anchor: middle;
}

/* Browser */
.panel-head {
    height: 25px;
    display: flex;
    align-items: center;
    background-color: var(--head-color);
    border: 1px solid var(--line-color);
}

.panel-head h2 {
    font-size: 10px;
    font-weight: normal;
    color: #666;
}

.browser .panel-head, .comments {
    width: 300px;
    padding: 0 1px 0 4px;
}

.browser h2 {
    margin-left: 10px;
}

.comments h2 {
    margin-left: 22px;
}

.browser .round, .comments .round {
    margin-left: auto;
    margin-right: 7px;
}

.tree {
    list-style: none;
    display: flex;
    flex-direction: column;
    gap: 4px;
    margin-top: 5px;
}

.tree li {
    display: flex;
    align-items: center;
    height: 20px;
}

.tree a {
    display: flex;
    align-items: center;
    height: 20px;
    padding: 0 8px 0 3px;
    gap: 9px;
    background-color: #cccccc;
}

.tree a span {
    margin-left: 5px;
}

.level-0 {
    padding-left: 16px;
}

.level-1 {
    padding-left: 36px;
}

.twist {
    width: 12px;
    margin-right: 6px;
}

.level-0 .twist {
    margin-right: 8px;
}

/* View cube and drill dialog */
.right-side {
    display: flex;
    flex-direction: column;
    align-items: flex-end;
    gap: 96px;
    padding-top: 16px;
}

.view-cube {
    margin-right: 18px;
}

.view-cube text {
    font-size: 11px;
    font-weight: bold;
    fill: #94979c;
    text-anchor: middle;
}

.drill {
    width: 323px;
    background-color: var(--panel-color);
    border: 1px solid var(--line-color);
}

.drill .panel-head {
    border-width: 0 0 1px;
    height: 24px;
    padding: 0 3px 0 1px;
}

.drill .round {
    margin: 0 6px 0 7px;
}

.flip {
    margin-left: auto;
    transform: scaleX(-1);
}

.drill-tabs {
    display: flex;
    height: 28px;
    padding-top: 2px;
    border-bottom: 1px solid var(--line-color);
}

.drill-tabs button {
    gap: 6px;
    padding: 0 7px 2px 6px;
    border-right: 1px solid #b8b8b8;
}

.drill-tabs svg {
    margin-top: 2px;
}

.drill-tabs button:first-child {
    padding-left: 8px;
}

.drill-tabs .current {
    height: 26px;
    background-color: var(--panel-color);
    border-top: 1px solid #b8b8b8;
}

.drill-body {
    margin-right: 13px;
    padding: 2px 0 5px 10px;
    border-bottom: 2px solid #c2c2c2;
}

.drill h3 {
    display: flex;
    align-items: center;
    gap: 6px;
    height: 25px;
    padding-bottom: 2px;
    font-size: 12px;
}

.field {
    display: flex;
    align-items: center;
    height: 26px;
}

.field label {
    width: 147px;
}

.select-box {
    flex: 1;
    display: flex;
    align-items: center;
    position: relative;
}

.select-box select {
    appearance: none;
    width: 100%;
    height: 23px;
    padding: 0 5px;
    font: inherit;
    color: inherit;
    background-color: #c8c8c8;
    border: 1px solid #d2d2d2;
    border-radius: 0;
}

.select-box .caret {
    position: absolute;
    right: 5px;
    pointer-events: none;
}

.face {
    height: 24px;
    padding: 0 8px 0 6px;
    gap: 5px;
    color: #fff;
    background-color: var(--accent-color);
}

.clear {
    margin-left: 9px;
    color: #666;
}

.drill input {
    appearance: none;
    width: 13px;
    height: 13px;
    margin: 0;
    border: 1px solid #555;
    border-radius: 3px;
    background: linear-gradient(#f0f0f0, #b9b9b9);
    box-shadow: 0 1px 0 #f4f4f4;
}

.field input {
    margin-left: 3px;
}

.drill input:checked::after {
    content: "";
    display: block;
    width: 4px;
    height: 8px;
    margin-left: 4px;
    border: solid #111;
    border-width: 0 1px 2px 0;
    transform: rotate(40deg);
}

.orientation {
    display: flex;
    align-items: center;
    gap: 7px;
    height: 49px;
    padding: 0 10px 17px;
    font-weight: bold;
}

.drill-foot {
    display: flex;
    justify-content: flex-end;
    align-items: center;
    gap: 10px;
    height: 36px;
    padding-right: 16px;
    background-color: var(--head-color);
    border-top: 1px solid var(--line-color);
}

.drill-foot button {
    width: 60px;
    height: 19px;
    justify-content: center;
    font-size: 12px;
    color: #666;
    background-color: #e6e6e6;
    border: 1px solid #b4b4b4;
}

/* Bottom row */
.status-row {
    grid-column: 1 / -1;
    display: grid;
    grid-template-columns: 1fr auto 1fr;
    align-items: center;
}

.view-tools {
    display: flex;
    gap: 6px;
}

.tool-set {
    display: flex;
    align-items: center;
    gap: 7px;
    height: 24px;
    padding: 0 4px 0 2px;
    background-color: #c9c9c9;
}

.tool-set button {
    gap: 3px;
}

.selection-info {
    justify-self: end;
    margin-right: 31px;
    font-weight: bold;
}

/* Taskbar */
.taskbar {
    height: 40px;
    display: flex;
    gap: 4px;
    padding: 1px 0;
    background: linear-gradient(90deg, #242d37, #2b3c4c 20%, #2d3e4e 55%, #2a3846 80%, #232b35);
    border-top: 1px solid #11161d;
    box-shadow: inset 0 1px 0 #66717c;
}

.start, .app {
    justify-content: center;
}

.start {
    width: 48px;
}

.app {
    width: 58px;
    border: 1px solid transparent;
}

.app.running {
    background-color: #515c67;
    border-color: #7d8791;
}

.app.focused {
    background: linear-gradient(135deg, #b9bcbf, #7e8489);
    border-color: #e6e8ea;
}

.sw {
    font: bold 15px "Liberation Sans", sans-serif;
    fill: #fff;
}

.sw-year {
    font: bold 10px "Liberation Sans", sans-serif;
    fill: #fff;
}

.f-360 {
    font: bold 6px "Liberation Sans", sans-serif;
    fill: #1488c4;
}

.notify {
    margin-left: auto;
    margin-right: 18px;
    display: flex;
    align-items: center;
    gap: 8px;
    color: #fff;
    font-family: "Open Sans", sans-serif;
}

.notify > svg:first-child {
    margin-right: 5px;
}

.lang {
    margin: 0 8px 0 7px;
    font-size: 12px;
}

.clock {
    display: flex;
    flex-direction: column;
    align-items: center;
    line-height: 17px;
}
```
